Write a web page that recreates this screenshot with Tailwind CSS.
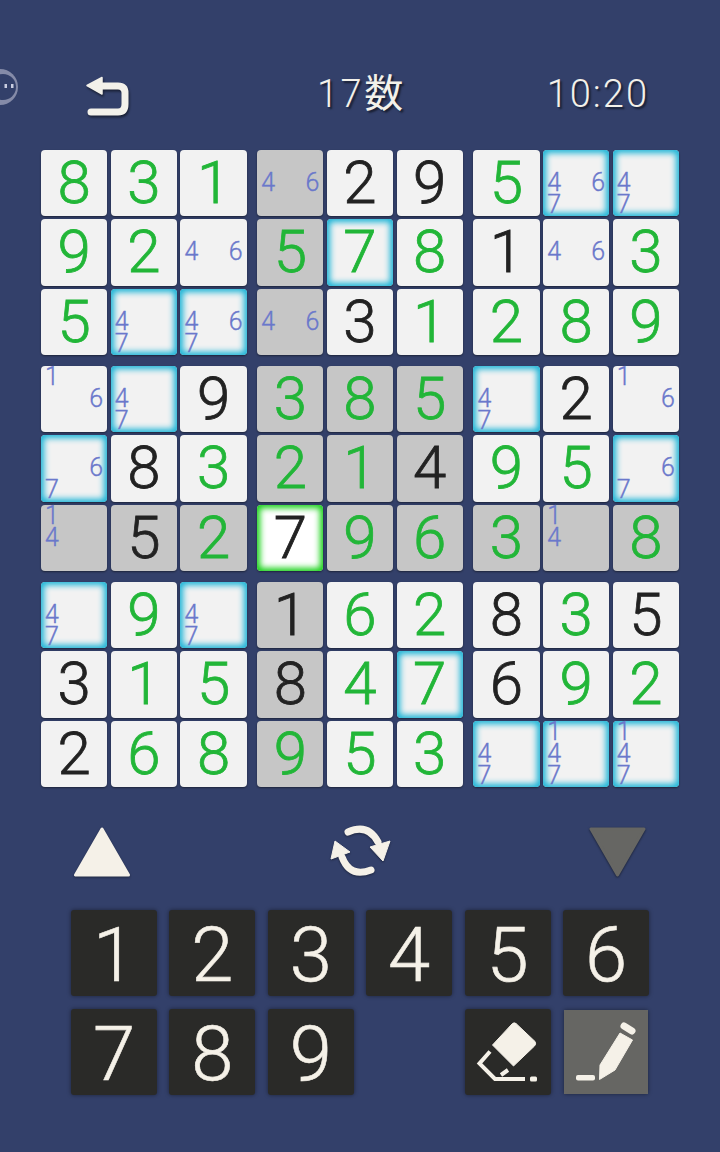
<!DOCTYPE html>
<html><head><meta charset="utf-8"><script src="https://cdn.jsdelivr.net/npm/@tailwindcss/browser@4"></script></head>
<body class="bg-[#33406a]">
<div class="relative w-[720px] h-[1152px] overflow-hidden bg-[#33406a] font-['Roboto','Noto_Sans_CJK_JP',sans-serif]">
<svg class="absolute left-0 top-[69px]" width="20" height="36" viewBox="0 69 20 36"><circle cx="0" cy="87" r="18" fill="#858ba8"/><circle cx="3" cy="87" r="13" fill="#33406a"/><rect x="4.500" y="84" width="2.500" height="4" fill="#c9cde0"/><rect x="11" y="84" width="2.500" height="4" fill="#c9cde0"/></svg>
<header class="h-[149.5px] pt-[75px] flex items-start text-[#f3f1ea] [text-shadow:2px_2px_2px_rgba(0,0,0,.55)]">
<svg class="ml-[85px] drop-shadow-[1px_2px_1px_rgba(0,0,0,.5)]" width="48" height="44" viewBox="85 75 48 44"><path d="M87 85.500 102 77.500V94Z" fill="#f3f1ea" stroke="#f3f1ea" stroke-width="1.500" stroke-linejoin="round"/><path d="M100 86H118Q125 86 125 93V104Q125 112 118 112H91" fill="none" stroke="#f3f1ea" stroke-width="7" stroke-linecap="round"/></svg>
<div class="ml-[184px] mt-[-5px] text-[38px] font-light tracking-[2.500px] leading-[48px]">17<span class="font-normal text-[39px]">数</span></div>
<div class="ml-[141px] mt-[-5px] text-[38px] font-light tracking-[2px] leading-[48px]">10:20</div>
</header>
<main class="ml-[41px] w-[638px] grid grid-cols-3 gap-x-[10.5px] gap-y-[10.5px] text-[#22b638] text-[60px] font-light [-webkit-text-stroke:0.8px_currentColor] leading-none [&>div]:grid [&>div]:grid-cols-3 [&>div]:gap-x-[3.5px] [&>div]:gap-y-[3px] [&>div>div]:flex [&>div>div]:items-center [&>div>div]:justify-center [&>div>div]:h-[66.5px] [&>div>div]:rounded-[4px] [&>div>div]:shadow-[0_1px_2px_rgba(0,0,0,.45)] [&_section]:w-full [&_section]:h-full [&_section]:grid [&_section]:grid-cols-3 [&_section]:grid-rows-3 [&_section]:place-items-center [&_section]:text-[25px] [&_section]:leading-[22px] [&_section]:font-light [&_section]:[-webkit-text-stroke:0.35px_currentColor] [&_section]:text-[#6a78cb]">
<div>
<div class="bg-[#f2f2f2]">8</div><div class="bg-[#f2f2f2]">3</div><div class="bg-[#f2f2f2]">1</div>
<div class="bg-[#f2f2f2]">9</div><div class="bg-[#f2f2f2]">2</div><div class="bg-[#f2f2f2]"><section><span class="col-start-1 row-start-2">4</span><span class="col-start-3 row-start-2">6</span></section></div>
<div class="bg-[#f2f2f2]">5</div><div class="bg-[#f2f2f2] inset-shadow-[0_0_6px_3px_#17b3d6]"><section><span class="col-start-1 row-start-2">4</span><span class="col-start-1 row-start-3">7</span></section></div><div class="bg-[#f2f2f2] inset-shadow-[0_0_6px_3px_#17b3d6]"><section><span class="col-start-1 row-start-2">4</span><span class="col-start-3 row-start-2">6</span><span class="col-start-1 row-start-3">7</span></section></div>
</div>
<div>
<div class="bg-[#c6c6c6]"><section><span class="col-start-1 row-start-2">4</span><span class="col-start-3 row-start-2">6</span></section></div><div class="bg-[#f2f2f2] text-[#222]">2</div><div class="bg-[#f2f2f2] text-[#222]">9</div>
<div class="bg-[#c6c6c6]">5</div><div class="bg-[#f2f2f2] inset-shadow-[0_0_6px_3px_#17b3d6]">7</div><div class="bg-[#f2f2f2]">8</div>
<div class="bg-[#c6c6c6]"><section><span class="col-start-1 row-start-2">4</span><span class="col-start-3 row-start-2">6</span></section></div><div class="bg-[#f2f2f2] text-[#222]">3</div><div class="bg-[#f2f2f2]">1</div>
</div>
<div>
<div class="bg-[#f2f2f2]">5</div><div class="bg-[#f2f2f2] inset-shadow-[0_0_6px_3px_#17b3d6]"><section><span class="col-start-1 row-start-2">4</span><span class="col-start-3 row-start-2">6</span><span class="col-start-1 row-start-3">7</span></section></div><div class="bg-[#f2f2f2] inset-shadow-[0_0_6px_3px_#17b3d6]"><section><span class="col-start-1 row-start-2">4</span><span class="col-start-1 row-start-3">7</span></section></div>
<div class="bg-[#f2f2f2] text-[#222]">1</div><div class="bg-[#f2f2f2]"><section><span class="col-start-1 row-start-2">4</span><span class="col-start-3 row-start-2">6</span></section></div><div class="bg-[#f2f2f2]">3</div>
<div class="bg-[#f2f2f2]">2</div><div class="bg-[#f2f2f2]">8</div><div class="bg-[#f2f2f2]">9</div>
</div>
<div>
<div class="bg-[#f2f2f2]"><section><span class="col-start-1 row-start-1">1</span><span class="col-start-3 row-start-2">6</span></section></div><div class="bg-[#f2f2f2] inset-shadow-[0_0_6px_3px_#17b3d6]"><section><span class="col-start-1 row-start-2">4</span><span class="col-start-1 row-start-3">7</span></section></div><div class="bg-[#f2f2f2] text-[#222]">9</div>
<div class="bg-[#f2f2f2] inset-shadow-[0_0_6px_3px_#17b3d6]"><section><span class="col-start-3 row-start-2">6</span><span class="col-start-1 row-start-3">7</span></section></div><div class="bg-[#f2f2f2] text-[#222]">8</div><div class="bg-[#f2f2f2]">3</div>
<div class="bg-[#c6c6c6]"><section><span class="col-start-1 row-start-1">1</span><span class="col-start-1 row-start-2">4</span></section></div><div class="bg-[#c6c6c6] text-[#222]">5</div><div class="bg-[#c6c6c6]">2</div>
</div>
<div>
<div class="bg-[#c6c6c6]">3</div><div class="bg-[#c6c6c6]">8</div><div class="bg-[#c6c6c6]">5</div>
<div class="bg-[#c6c6c6]">2</div><div class="bg-[#c6c6c6]">1</div><div class="bg-[#c6c6c6] text-[#222]">4</div>
<div class="bg-white text-[#222] inset-shadow-[0_0_6px_3px_#12d012]">7</div><div class="bg-[#c6c6c6]">9</div><div class="bg-[#c6c6c6]">6</div>
</div>
<div>
<div class="bg-[#f2f2f2] inset-shadow-[0_0_6px_3px_#17b3d6]"><section><span class="col-start-1 row-start-2">4</span><span class="col-start-1 row-start-3">7</span></section></div><div class="bg-[#f2f2f2] text-[#222]">2</div><div class="bg-[#f2f2f2]"><section><span class="col-start-1 row-start-1">1</span><span class="col-start-3 row-start-2">6</span></section></div>
<div class="bg-[#f2f2f2]">9</div><div class="bg-[#f2f2f2]">5</div><div class="bg-[#f2f2f2] inset-shadow-[0_0_6px_3px_#17b3d6]"><section><span class="col-start-3 row-start-2">6</span><span class="col-start-1 row-start-3">7</span></section></div>
<div class="bg-[#c6c6c6]">3</div><div class="bg-[#c6c6c6]"><section><span class="col-start-1 row-start-1">1</span><span class="col-start-1 row-start-2">4</span></section></div><div class="bg-[#c6c6c6]">8</div>
</div>
<div>
<div class="bg-[#f2f2f2] inset-shadow-[0_0_6px_3px_#17b3d6]"><section><span class="col-start-1 row-start-2">4</span><span class="col-start-1 row-start-3">7</span></section></div><div class="bg-[#f2f2f2]">9</div><div class="bg-[#f2f2f2] inset-shadow-[0_0_6px_3px_#17b3d6]"><section><span class="col-start-1 row-start-2">4</span><span class="col-start-1 row-start-3">7</span></section></div>
<div class="bg-[#f2f2f2] text-[#222]">3</div><div class="bg-[#f2f2f2]">1</div><div class="bg-[#f2f2f2]">5</div>
<div class="bg-[#f2f2f2] text-[#222]">2</div><div class="bg-[#f2f2f2]">6</div><div class="bg-[#f2f2f2]">8</div>
</div>
<div>
<div class="bg-[#c6c6c6] text-[#222]">1</div><div class="bg-[#f2f2f2]">6</div><div class="bg-[#f2f2f2]">2</div>
<div class="bg-[#c6c6c6] text-[#222]">8</div><div class="bg-[#f2f2f2]">4</div><div class="bg-[#f2f2f2] inset-shadow-[0_0_6px_3px_#17b3d6]">7</div>
<div class="bg-[#c6c6c6]">9</div><div class="bg-[#f2f2f2]">5</div><div class="bg-[#f2f2f2]">3</div>
</div>
<div>
<div class="bg-[#f2f2f2] text-[#222]">8</div><div class="bg-[#f2f2f2]">3</div><div class="bg-[#f2f2f2] text-[#222]">5</div>
<div class="bg-[#f2f2f2] text-[#222]">6</div><div class="bg-[#f2f2f2]">9</div><div class="bg-[#f2f2f2]">2</div>
<div class="bg-[#f2f2f2] inset-shadow-[0_0_6px_3px_#17b3d6]"><section><span class="col-start-1 row-start-2">4</span><span class="col-start-1 row-start-3">7</span></section></div><div class="bg-[#f2f2f2] inset-shadow-[0_0_6px_3px_#17b3d6]"><section><span class="col-start-1 row-start-1">1</span><span class="col-start-1 row-start-2">4</span><span class="col-start-1 row-start-3">7</span></section></div><div class="bg-[#f2f2f2] inset-shadow-[0_0_6px_3px_#17b3d6]"><section><span class="col-start-1 row-start-1">1</span><span class="col-start-1 row-start-2">4</span><span class="col-start-1 row-start-3">7</span></section></div>
</div>
</main>
<div class="ml-[72px] w-[576px] mt-[38px] flex justify-between items-center h-[54px]">
<svg class="drop-shadow-[0_1px_1px_rgba(0,0,0,.4)]" width="60" height="54" viewBox="72 825 60 54"><path d="M102 829 75.500 875H128.500Z" fill="#f5f1e8" stroke="#f5f1e8" stroke-width="3" stroke-linejoin="round"/></svg>
<svg class="drop-shadow-[0_1px_1px_rgba(0,0,0,.4)]" width="62" height="56" viewBox="329 825 62 56"><path d="M348 833Q368 824 378 843M371 871Q350 879 342 858" fill="none" stroke="#f5f1e8" stroke-width="7" stroke-linecap="round"/><path d="M370 848 390 842 383 862ZM331 860 335 842 350 853Z" fill="#f5f1e8" stroke="#f5f1e8" stroke-linejoin="round"/></svg>
<svg class="drop-shadow-[0_1px_1px_rgba(0,0,0,.5)]" width="60" height="54" viewBox="588 825 60 54"><path d="M591 829H644L617.500 875Z" fill="#666663" stroke="#666663" stroke-width="3" stroke-linejoin="round"/></svg>
</div>
<div class="ml-[71px] mt-[31px] w-[578px] grid grid-cols-6 gap-x-[12.4px] gap-y-[13px] text-[#f5f1e8] text-[76px] font-light [-webkit-text-stroke:0.6px_currentColor] leading-none [&>div]:flex [&>div]:items-center [&>div]:justify-center [&>div]:pt-[4px] [&>div]:h-[86px] [&>div]:bg-[#2a2a28] [&>div]:rounded-[3px] [&>div]:shadow-[0_0_4px_rgba(0,0,0,.45)]">
<div>1</div><div>2</div><div>3</div><div>4</div><div>5</div><div>6</div>
<div>7</div><div>8</div><div>9</div><span></span>
<div class="!pt-0"><svg width="86" height="86" viewBox="465 1009 86 86"><path d="M516 1023.500 535 1041.500Q536.500 1044 534.500 1046L513.500 1066 492.500 1045 512 1024Q514 1022 516 1023.500Z" fill="#f5f1e8" stroke="#f5f1e8" stroke-linejoin="round"/><path d="M490 1051.500 479.500 1063.500 495 1079H525M508 1070 501 1075" fill="none" stroke="#f5f1e8" stroke-width="4"/><rect x="530" y="1076.500" width="7" height="5" rx="1.500" fill="#f5f1e8"/></svg></div>
<div class="!pt-0 !bg-[#666663] !rounded-none !w-[84px] !h-[84px] self-center justify-self-center"><svg width="84" height="84" viewBox="564 1010 84 84"><path d="M599.500 1079.500 600 1065 620 1033 632.500 1040 615 1070Z" fill="#f5f1e8" stroke="#f5f1e8" stroke-linejoin="round"/><path d="M624 1026 632 1031" stroke="#f5f1e8" stroke-width="7" stroke-linecap="round"/><rect x="576" y="1075" width="19" height="5.500" rx="2" fill="#f5f1e8"/></svg></div>
</div>
</div>
</body></html>
